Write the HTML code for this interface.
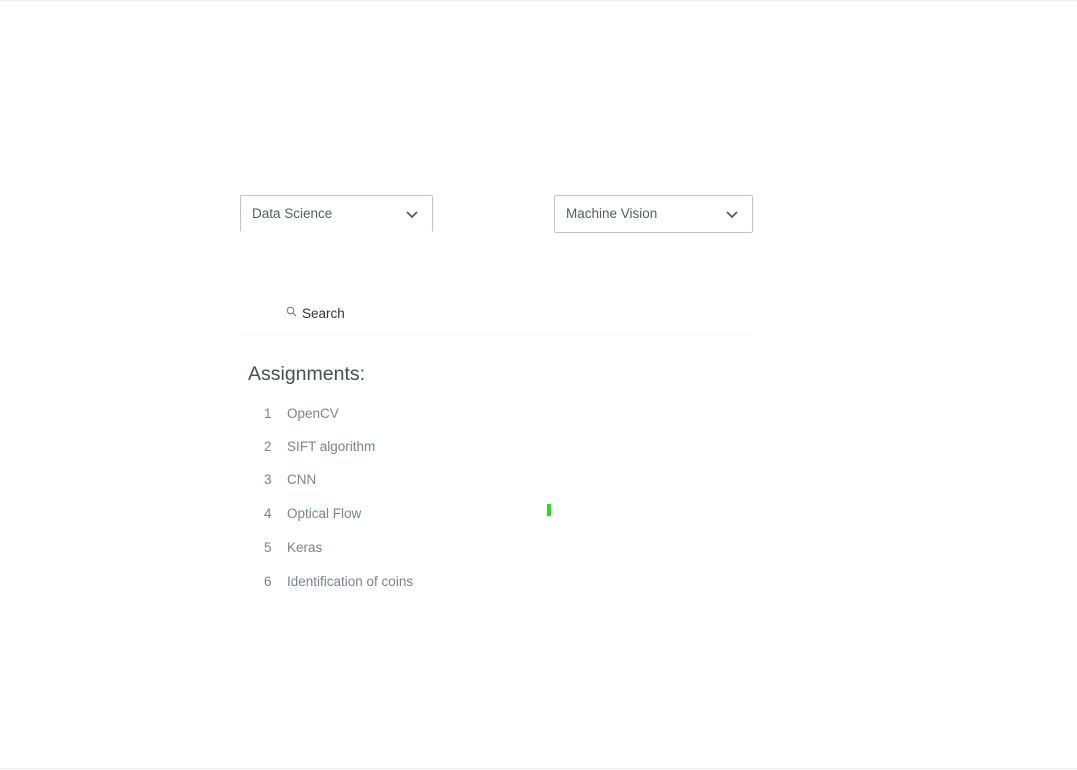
<!DOCTYPE html>
<html><head><style>
body{margin:0;width:1077px;height:770px;background:#fff;position:relative;overflow:hidden;font-family:"Liberation Sans",sans-serif;}
.top{position:absolute;left:0;top:0;width:1077px;height:1px;background:#ececec}
.bot{position:absolute;left:0;top:768px;width:1077px;height:1px;background:#ececec}
.sel{position:absolute;height:38px;border:1px solid #bfc3c8;border-radius:2px;box-sizing:border-box;font-size:13.5px;color:#555c66;line-height:36px;padding-left:11px}
.sel svg{position:absolute;right:14px;top:15px}
.t{position:absolute;color:#7a8393;font-size:13.5px}
</style></head><body>
<div class="top"></div><div class="bot"></div>
<div class="sel" style="left:240px;top:195px;width:193px;height:37px;border-bottom:none">Data Science<svg width="12" height="8" viewBox="0 0 12 8"><path d="M1 1l5 5 5-5" stroke="#555c66" stroke-width="1.8" fill="none"/></svg></div>
<div class="sel" style="left:554px;top:195px;width:199px">Machine Vision<svg width="12" height="8" viewBox="0 0 12 8"><path d="M1 1l5 5 5-5" stroke="#555c66" stroke-width="1.8" fill="none"/></svg></div>
<svg style="position:absolute;left:286px;top:306px" width="11" height="11" viewBox="0 0 11 11"><circle cx="4.5" cy="4.5" r="3.3" stroke="#666" stroke-width="0.9" fill="none"/><path d="M7 7l3 3" stroke="#666" stroke-width="0.9"/></svg>
<div class="t" style="left:302px;top:306px;color:#333;font-size:13.5px">Search</div>
<div style="position:absolute;left:240px;top:334px;width:513px;height:1px;background:#f8f8f8"></div>
<div class="t" style="left:248px;top:363px;font-size:19.5px;color:#4a4f57">Assignments:</div>
<div class="t" style="left:264px;top:406px">1</div><div class="t" style="left:287px;top:406px">OpenCV</div>
<div class="t" style="left:264px;top:439px">2</div><div class="t" style="left:287px;top:439px">SIFT algorithm</div>
<div class="t" style="left:264px;top:472px">3</div><div class="t" style="left:287px;top:472px">CNN</div>
<div class="t" style="left:264px;top:506px">4</div><div class="t" style="left:287px;top:506px">Optical Flow</div>
<div class="t" style="left:264px;top:540px">5</div><div class="t" style="left:287px;top:540px">Keras</div>
<div class="t" style="left:264px;top:574px">6</div><div class="t" style="left:287px;top:574px">Identification of coins</div>
<div style="position:absolute;left:547px;top:504px;width:4px;height:12px;background:#22dd22"></div>
</body></html>
